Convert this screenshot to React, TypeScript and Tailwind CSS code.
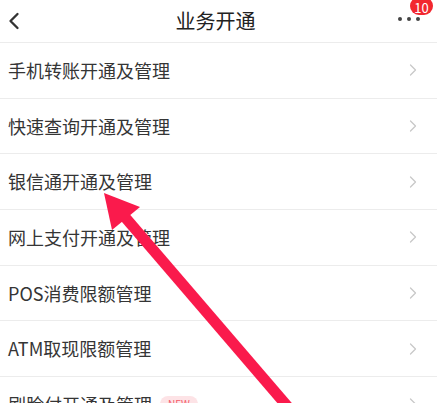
import { ChevronLeft, ChevronRight } from "lucide-react"

const rows = [
  "手机转账开通及管理",
  "快速查询开通及管理",
  "银信通开通及管理",
  "网上支付开通及管理",
  "POS消费限额管理",
  "ATM取现限额管理",
  "刷脸付开通及管理",
]

const font = { fontFamily: '"Noto Sans CJK SC", "Noto Sans", sans-serif' }

const Header = () => (
  <div className="relative flex h-[43px] items-center justify-center border-b border-[#ececec]">
    <ChevronLeft className="absolute left-[0px] top-[7px] h-[28px] w-[28px] text-[#333]" strokeWidth={2} />
    <h1 className="text-[20px] text-[#222] -ml-[6px]">业务开通</h1>
    <div className="absolute right-[17px] top-[17px] flex gap-[5px]">
      <span className="h-[4px] w-[4px] rounded-full bg-[#444]" />
      <span className="h-[4px] w-[4px] rounded-full bg-[#444]" />
      <span className="h-[4px] w-[4px] rounded-full bg-[#444]" />
    </div>
    <span className="absolute right-[4px] top-[-3px] flex h-[18px] min-w-[23px] items-center justify-center rounded-full bg-[#f2272f] px-[4px] pt-[2px] text-[13px] leading-none text-white">
      10
    </span>
  </div>
)

const Row = ({ label, tag }: { label: string; tag?: boolean }) => (
  <div className="flex h-[55.7px] items-center justify-between border-b border-[#ececec] pl-[8px] pr-[14px]">
    <div className="flex items-center gap-[8px]">
      <span className="text-[18px] text-[#353535]">{label}</span>
      {tag && (
        <span className="rounded-full bg-[#fde3e6] px-[8px] text-[10px] leading-[16px] text-[#f45a6a]">
          NEW
        </span>
      )}
    </div>
    <ChevronRight className="h-[20px] w-[20px] text-[#c8c8c8]" strokeWidth={1.5} />
  </div>
)

export default function App() {
  return (
    <div className="relative h-[403px] w-[437px] overflow-hidden bg-white" style={font}>
      <Header />
      {rows.map((r, i) => (
        <Row key={r} label={r} tag={i === rows.length - 1} />
      ))}
      <svg className="pointer-events-none absolute left-0 top-0" width="437" height="403" viewBox="0 0 437 403">
        <line x1="124" y1="216" x2="294" y2="414" stroke="#fa1a4c" strokeWidth="11" />
        <polygon points="104,193 140,207 112,230" fill="#fa1a4c" />
      </svg>
    </div>
  )
}
